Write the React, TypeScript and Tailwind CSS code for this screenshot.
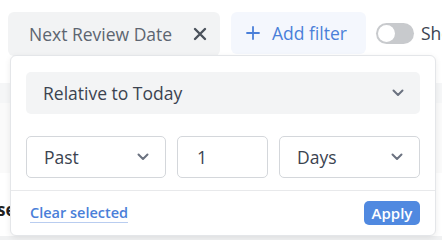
import React from "react";

function Chevron({ className = "" }: { className?: string }) {
  return (
    <svg width="12" height="8" viewBox="0 0 12 8" className={className} fill="none">
      <path d="M1.5 1.5L6 6L10.5 1.5" stroke="#6b7280" strokeWidth="2" strokeLinecap="round" strokeLinejoin="round" />
    </svg>
  );
}

function SelectBox({ label, filled = false }: { label: string; filled?: boolean }) {
  return (
    <div
      className={
        "flex h-[42px] items-center justify-between rounded-[5px] pl-[17px] pr-[16px] text-[17.5px] text-[#3b4350] " +
        (filled ? "bg-[#f3f4f5]" : "border border-[#d4d7db] bg-white")
      }
    >
      <span>{label}</span>
      <Chevron />
    </div>
  );
}

export default function App() {
  return (
    <div
      className="relative h-[240px] w-[442px] overflow-hidden bg-white"
      style={{ fontFamily: '"Open Sans", "Noto Sans", sans-serif' }}
    >
      {/* filter bar */}
      <div className="flex items-start whitespace-nowrap pl-[8px] pt-[12px]">
        <div className="flex h-[44px] w-[212px] shrink-0 items-center justify-between rounded-md bg-[#f2f3f4] pl-[21px] pr-[13px] text-[17.5px] text-[#5d6570]">
          <span>Next Review Date</span>
          <svg width="14" height="14" viewBox="0 0 14 14">
            <path d="M2 2L12 12M12 2L2 12" stroke="#4b525c" strokeWidth="2.4" strokeLinecap="round" />
          </svg>
        </div>
        <div className="ml-[11px] flex h-[42px] w-[135px] shrink-0 items-center gap-[12px] rounded-md bg-[#f4f7fd] pl-[15px] text-[17.5px] font-medium text-[#4a7fd9]">
          <svg width="14" height="14" viewBox="0 0 14 14">
            <path d="M7 1V13M1 7H13" stroke="#4a7fd9" strokeWidth="1.8" strokeLinecap="round" />
          </svg>
          <span>Add filter</span>
        </div>
        <div className="ml-[10px] mt-[11px] flex h-[21px] w-[38px] shrink-0 items-center rounded-full bg-[#c8cacd] px-[2px]">
          <div className="h-[17px] w-[17px] rounded-full bg-white" />
        </div>
        <span className="ml-[7px] mt-[8px] shrink-0 text-[17.5px] text-[#3b4350]">Show</span>
      </div>

      {/* table behind */}
      <div className="mt-[27px] h-[20px] w-full bg-[#f5f6f7]" />
      <div className="h-[70px] w-full bg-[#fafafa]" />
      <div className="ml-[-3px] mt-[24px] w-[20px] text-[17px] font-bold text-[#222]">se</div>
      <div className="absolute bottom-0 left-0 h-[4px] w-full bg-[#f0f1f2]" />

      {/* popover */}
      <div className="absolute left-[10px] top-[55px] flex h-[181px] w-[426px] flex-col rounded-md border border-[#e4e6e9] bg-white shadow-[0_2px_6px_rgba(0,0,0,0.08)]">
        <div className="px-[15px] pt-[16px]">
          <SelectBox label="Relative to Today" filled />
          <div className="mt-[22px] grid grid-cols-[140px_91px_1fr] gap-[11px]">
            <SelectBox label="Past" />
            <div className="flex h-[42px] items-center rounded-[5px] border border-[#d4d7db] pl-[19px] text-[17.5px] text-[#3b4350]">
              1
            </div>
            <SelectBox label="Days" />
          </div>
        </div>
        <div className="mt-[12px] border-t border-[#e8e9eb]" />
        <div className="flex flex-1 items-center justify-between pl-[19px] pr-[15px]">
          <span className="border-b border-[#b9cdf0] text-[14.5px] font-semibold leading-[18px] text-[#4a7fd9]">
            Clear selected
          </span>
          <button className="h-[24px] w-[56px] rounded-[5px] bg-[#5089e0] text-[15px] font-semibold text-white">
            Apply
          </button>
        </div>
      </div>
    </div>
  );
}
